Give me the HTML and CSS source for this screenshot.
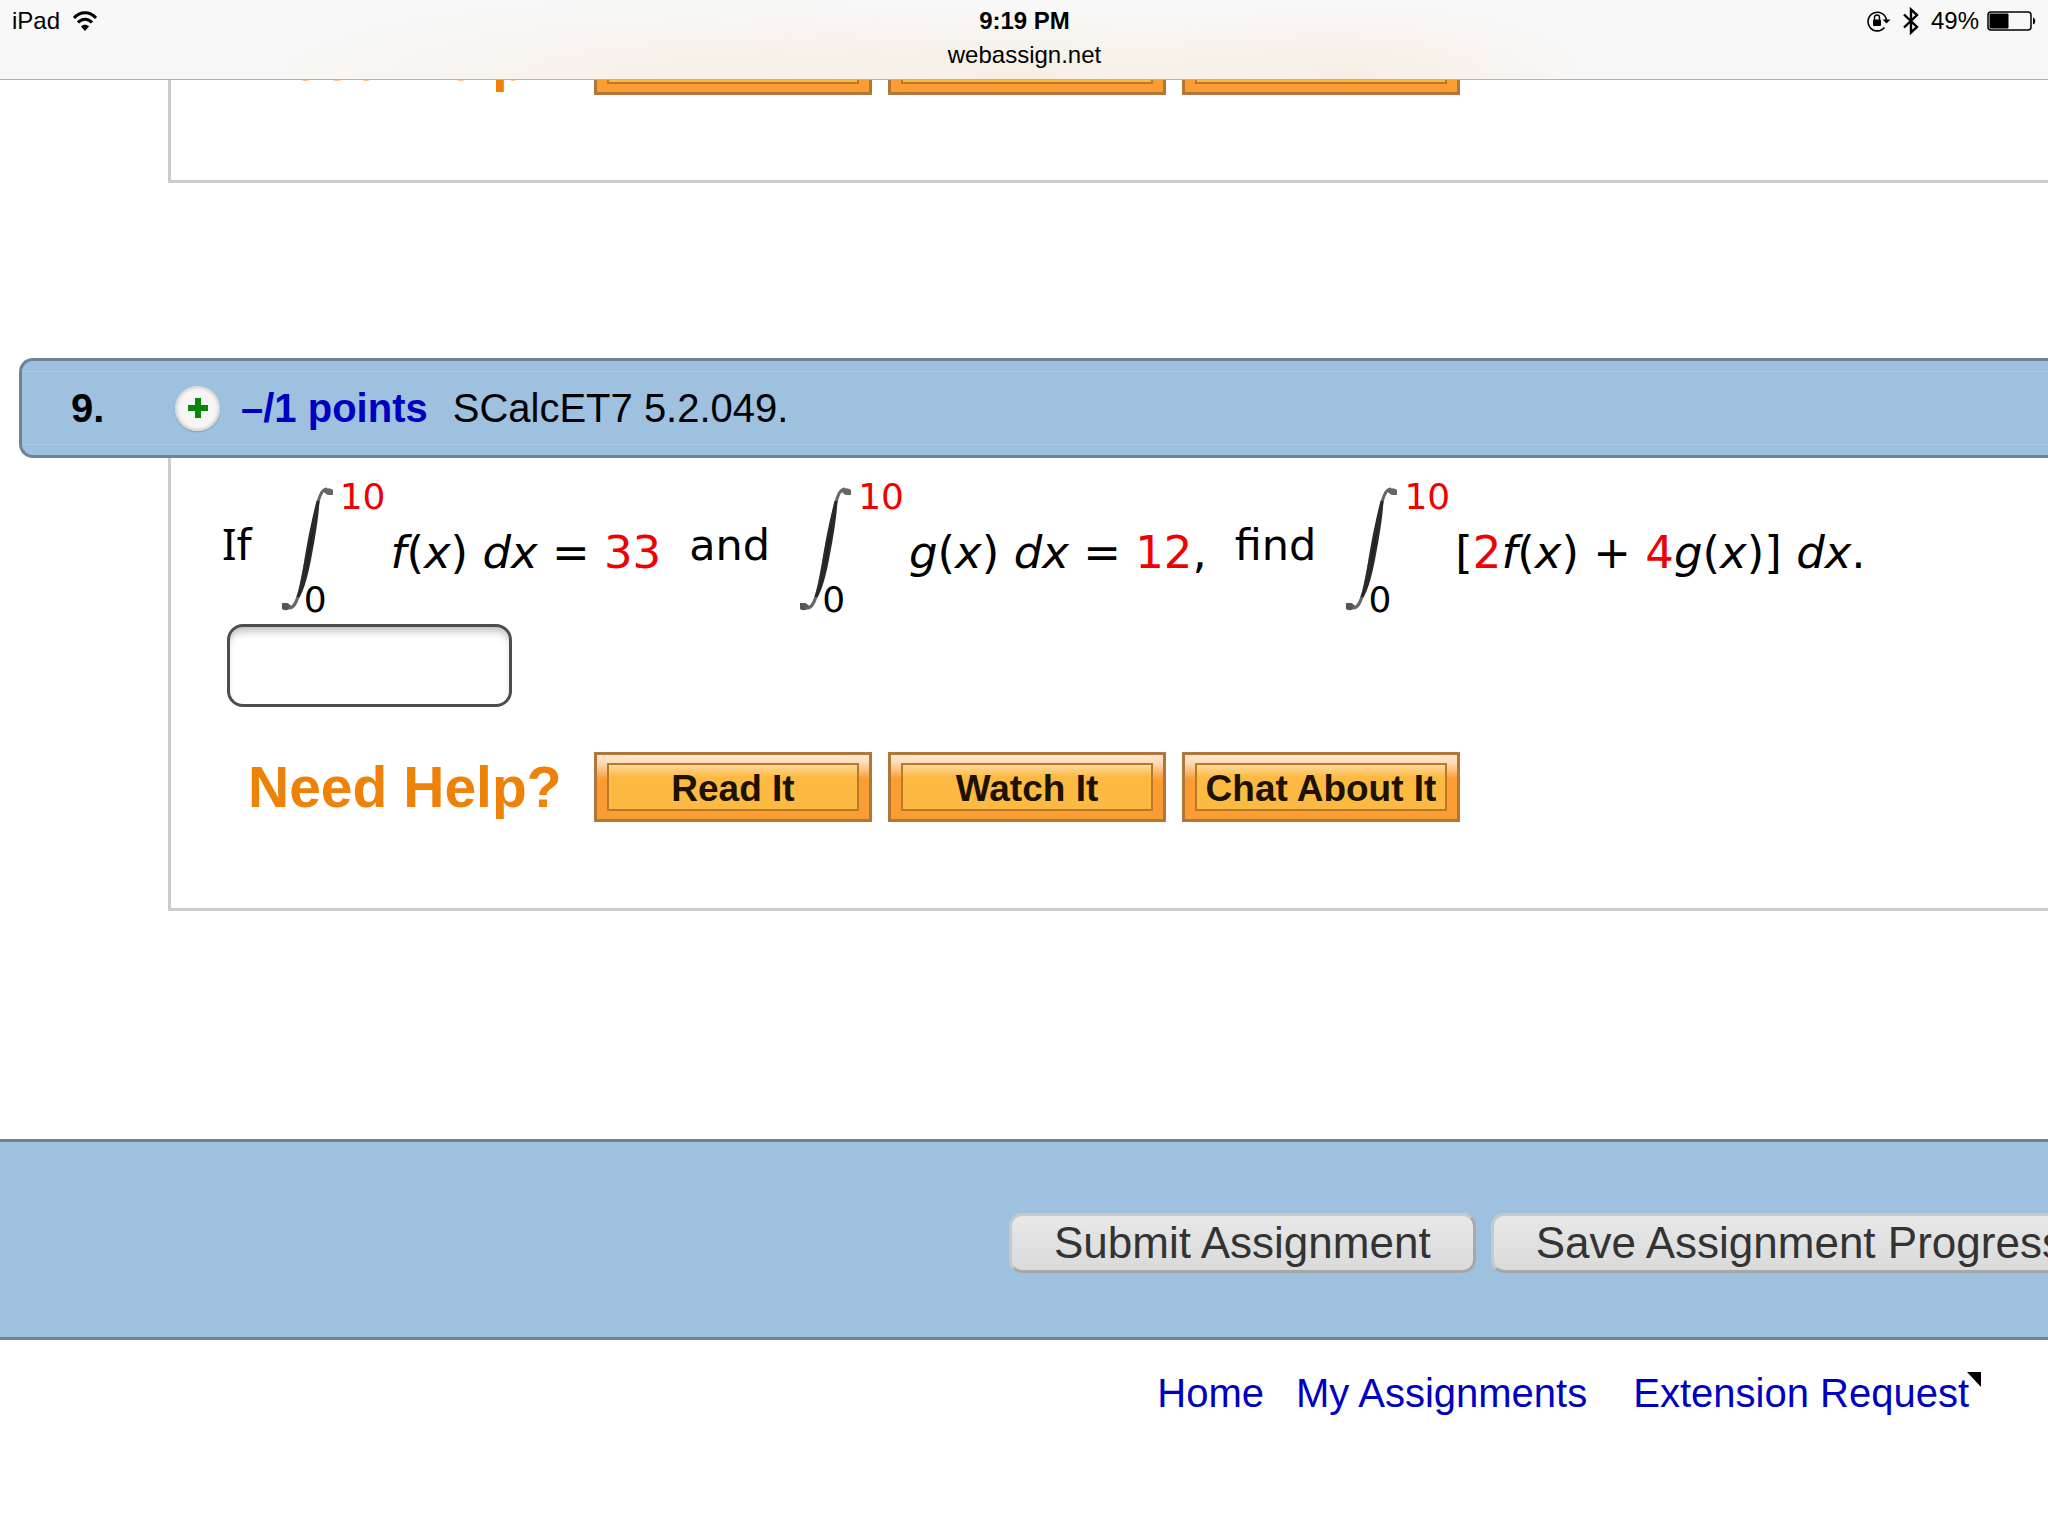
FILE: index.html
```html
<!DOCTYPE html>
<html lang="en">
<head>
<meta charset="utf-8">
<meta name="viewport" content="width=device-width, initial-scale=1">
<title>WebAssign</title>
<link rel="stylesheet" href="styles.css">
</head>
<body>
<svg class="defs" aria-hidden="true">
  <defs>
    <symbol id="integral" viewBox="0 0 51 124">
      <path d="M0 116h5c2 0 3 3 5 3-3 5-7 5-10 3z" fill="#555"/>
      <path d="M51 8h-5c-2 0-3-3-5-3 2-5 7-4 10-2z" fill="#666"/>
      <path d="M7 121C13 121 16 112 19 98L32 34C36 14 38 2 45 2" fill="none" stroke="#666" stroke-width="3"/>
      <path d="M16 110C21 96 22 84 25 66C28 48 31 34 36 14C35 34 31 54 28 70C25 86 21 102 16 110Z" fill="#111" stroke="#2a2a2a" stroke-width="3"/>
    </symbol>
  </defs>
</svg>

<header class="status">
  <div class="status-left">
    <span>iPad</span>
    <svg width="26" height="22" viewBox="0 0 26 22" aria-hidden="true">
      <g fill="none" stroke="#000" stroke-width="3">
        <path d="M2 8C8 1 18 1 24 8"/>
        <path d="M6 12.500C10 8 16 8 20 12.500"/>
      </g>
      <path d="M9 16.500C11 14 15 14 17 16.500L13 21Z"/>
    </svg>
  </div>
  <div class="status-mid">
    <strong>9:19 PM</strong>
    <span>webassign.net</span>
  </div>
  <div class="status-right">
    <svg width="24" height="22" viewBox="0 0 24 22" aria-hidden="true">
      <path d="M17.500 17.500A9.300 9.300 0 1 1 19.500 10" fill="none" stroke="#000" stroke-width="1.600"/>
      <path d="M15.500 9.500h8l-4 4z"/>
      <rect x="6" y="9.500" width="8" height="6.500" rx="1"/>
      <path d="M7.500 10V7.500a2.500 2.500 0 0 1 5 0V10" fill="none" stroke="#000" stroke-width="1.400"/>
    </svg>
    <svg class="bluetooth" width="16" height="28" viewBox="0 0 16 28" aria-hidden="true">
      <path d="M1 7.500 14 20 8 25.500V2.500L14 8 1 20.500" fill="none" stroke="#000" stroke-width="2.400"/>
    </svg>
    <span>49%</span>
    <svg width="50" height="20" viewBox="0 0 50 20" aria-hidden="true">
      <rect x="1" y="1" width="43" height="18" rx="3" fill="none" stroke="#000" stroke-width="1.500"/>
      <rect x="2.500" y="2.500" width="19" height="15" rx="1"/>
      <path d="M46 6.500c3 1 3 6 0 7z"/>
    </svg>
  </div>
</header>

<main>
  <section class="body previous">
    <div class="help">
      <span class="help-title">Need Help?</span>
      <button class="help-btn" type="button" aria-label="Read It"><span></span></button>
      <button class="help-btn" type="button" aria-label="Watch It"><span></span></button>
      <button class="help-btn" type="button" aria-label="Chat About It"><span></span></button>
    </div>
  </section>

  <section class="question">
    <div class="bar">
      <strong class="number">9.</strong>
      <button class="expand" type="button" aria-label="Show details">
        <svg width="22" height="22" viewBox="0 0 22 22" aria-hidden="true"><path d="M8 1h6v7h7v6h-7v7H8v-7H1V8h7z" fill="#0a870a"/></svg>
      </button>
      <a class="points" href="#points">–/1 points</a>
      <span>SCalcET7 5.2.049.</span>
    </div>
    <div class="body">
      <div class="problem">
        <label class="word" for="answer"><span class="serif-i">I</span>f</label>
        <span class="integral"><svg width="51" height="124"><use href="#integral"/></svg><span class="limits"><span class="upper">10</span><span>0</span></span></span>
        <span class="math"><i>f</i>(<i>x</i>) <i>dx</i> = <b>33</b></span>
        <span class="word">and</span>
        <span class="integral"><svg width="51" height="124"><use href="#integral"/></svg><span class="limits"><span class="upper">10</span><span>0</span></span></span>
        <span class="math"><i>g</i>(<i>x</i>) <i>dx</i> = <b>12</b>,</span>
        <span class="word">find</span>
        <span class="integral"><svg width="51" height="124"><use href="#integral"/></svg><span class="limits"><span class="upper">10</span><span>0</span></span></span>
        <span class="math">[<b>2</b><i>f</i>(<i>x</i>) + <b>4</b><i>g</i>(<i>x</i>)] <i>dx</i>.</span>
      </div>
      <input class="answer" id="answer" type="text">
      <div class="help">
        <span class="help-title">Need Help?</span>
        <button class="help-btn" type="button"><span>Read It</span></button>
        <button class="help-btn" type="button"><span>Watch It</span></button>
        <button class="help-btn" type="button"><span>Chat About It</span></button>
      </div>
    </div>
  </section>
</main>

<footer>
  <div class="actions">
    <button class="action" type="button">Submit Assignment</button>
    <button class="action" type="button">Save Assignment Progress</button>
  </div>
  <nav class="links">
    <a href="#home">Home</a>
    <a href="#assignments">My Assignments</a>
    <a class="extension" href="#extension">Extension Request<svg width="14" height="15" viewBox="0 0 14 15" aria-hidden="true"><path d="M0 0h14v15z"/></svg></a>
  </nav>
</footer>
</body>
</html>
```

FILE: styles.css
```css
* { box-sizing: border-box; }

body {
  margin: 0;
  overflow-x: hidden;
  background: #fff;
  color: #000;
  font: 40px/48px Arial, "Liberation Sans", sans-serif;
}

button { font-family: inherit; cursor: pointer; }
a { color: #0000c0; text-decoration: none; }
.defs { display: none; }

/* Status bar */
.status {
  display: grid;
  grid-template-columns: 1fr auto 1fr;
  height: 80px;
  padding: 4px 11px 0 12px;
  border-bottom: 1px solid #b2b2b2;
  background:
    radial-gradient(ellipse 26% 90% at 50% 100%, #f7efe4, #f7efe400),
    radial-gradient(ellipse 22% 110% at 34% 100%, #f7f1e9, #f7f1e900),
    radial-gradient(ellipse 12% 100% at 66% 100%, #f8efe5, #f8efe500),
    #f8f8f8;
  font-size: 24px;
  line-height: 34px;
}
.status-left, .status-right { display: flex; align-items: center; height: 34px; }
.status-left { gap: 12px; }
.status-right { justify-content: flex-end; gap: 8px; }
.bluetooth { margin: 0 4px; }
.status-mid { display: flex; flex-direction: column; text-align: center; }

/* Question cards */
.body {
  display: flex;
  flex-direction: column;
  align-items: flex-start;
  margin-left: 168px;
  padding: 21px 0 86px 51px;
  border: solid #ccc;
  border-width: 0 0 3px 3px;
}
.previous {
  justify-content: flex-end;
  height: 103px;
  padding-top: 0;
  padding-bottom: 85px;
  overflow: hidden;
  margin-bottom: 175px;
}
.bar {
  display: flex;
  align-items: center;
  gap: 21px;
  height: 100px;
  margin-left: 19px;
  padding-left: 49px;
  border: 3px solid #6c8496;
  border-right: 0;
  border-radius: 14px 0 0 14px;
  background:
    linear-gradient(#a8cae6, #a8cae6) 0 10px / 100% 1px no-repeat,
    linear-gradient(#a8cae6, #a8cae6) 0 83px / 100% 1px no-repeat,
    #9dc1df;
}
.number { width: 83px; }
.expand {
  display: grid;
  place-items: center;
  width: 45px;
  height: 45px;
  padding: 0;
  border: 0;
  border-radius: 50%;
  background: #f6f6f6;
  box-shadow: inset 0 0 3px 2px #d2d2d2, 0 1px 2px #8a9aa8;
}
.points { margin-right: 4px; font-weight: bold; }

/* Problem statement */
.problem {
  display: flex;
  align-items: center;
  height: 139px;
  margin-bottom: 6px;
  font: 43px/52px Verdana, "DejaVu Sans", sans-serif;
  white-space: nowrap;
}
.word { padding-bottom: 8px; }
.math { padding-top: 8px; font-size: 45px; }
.math b { font-weight: normal; color: #f00000; }
.serif-i { font-family: "Noto Sans", sans-serif; }
.integral { display: flex; align-items: center; margin: 0 5px 0 30px; }
.limits {
  display: flex;
  flex-direction: column;
  justify-content: space-between;
  height: 139px;
  margin-left: -29px;
  font-size: 36px;
  line-height: 36px;
}
.upper { padding-left: 36px; color: #f00000; }
.math + .word { margin-left: 28px; }
.answer {
  width: 285px;
  height: 83px;
  margin: 0 0 45px 5px;
  padding: 0 16px;
  border: 3px solid #4d4d4d;
  border-radius: 16px;
  background: #fff;
  box-shadow: inset 0 8px 8px -4px #bbb;
  font-size: 40px;
}

/* Help row */
.help { display: flex; align-items: center; gap: 16px; padding-left: 26px; flex: none; }
.help-title {
  width: 330px;
  color: #ee8208;
  font-size: 57px;
  font-weight: bold;
  line-height: 64px;
}
.help-btn {
  width: 278px;
  height: 70px;
  padding: 8px 10px;
  border: 3px solid #b0763a;
  background: linear-gradient(#fde8d2, #fddcb8 8px, #fb9d33 24px);
  color: #1c1200;
  font-size: 37px;
  font-weight: bold;
}
.help-btn span {
  display: block;
  height: 48px;
  padding-top: 4px;
  border: 2px solid #b9792b;
  background: linear-gradient(#fcd9a0, #fdba43 12px);
  line-height: 40px;
  white-space: nowrap;
}

/* Submission footer */
footer { margin-top: 228px; }
.actions {
  display: flex;
  gap: 15px;
  padding: 71px 0 64px calc(50% - 15px);
  border: solid #6c8496;
  border-width: 3px 0;
  background: #9dc1df;
}
.action {
  flex: none;
  height: 60px;
  padding: 0 42px;
  border: 3px solid;
  border-color: #c6c9cb #a6a8aa #a6a8aa #c6c9cb;
  border-radius: 13px;
  background: linear-gradient(#e8e8e8, #dadadb);
  color: #333;
  font-size: 44px;
  line-height: 54px;
}
.links {
  display: flex;
  justify-content: flex-end;
  gap: 32px;
  padding: 29px 67px 96px 0;
}
.extension { display: flex; margin-left: 14px; }
.extension svg { margin: 3px 0 0 -2px; }
```
